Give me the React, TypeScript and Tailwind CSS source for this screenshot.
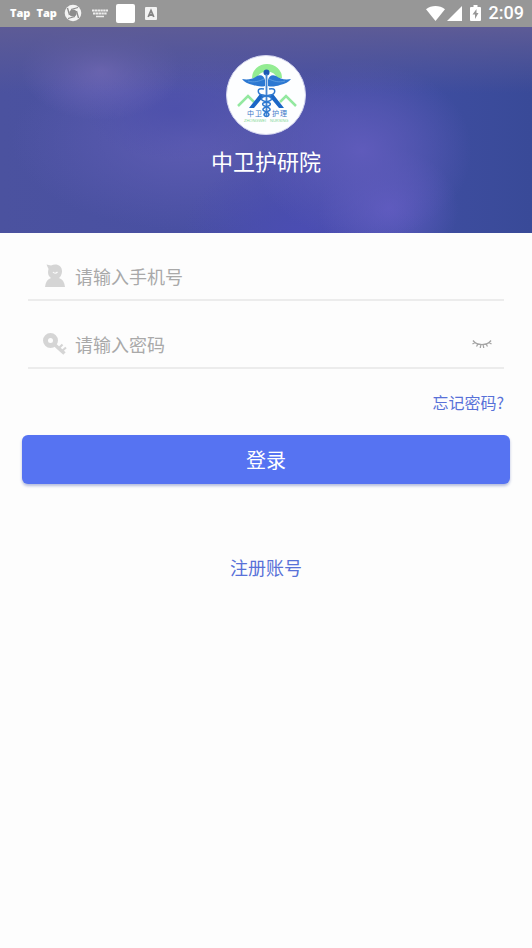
import { useState } from "react";

function StatusBar() {
  return (
    <div className="flex h-[27px] items-center justify-between bg-[#979797] pb-px pl-2.5 pr-2 text-white">
      <div className="flex items-center gap-1.5">
        <span className="font-['Open_Sans',sans-serif] text-[11px] font-extrabold leading-4">Tap</span>
        <span className="font-['Open_Sans',sans-serif] text-[11px] font-extrabold leading-4">Tap</span>
        <svg className="ml-px size-[18px]" viewBox="0 0 18 18">
          <circle cx="9" cy="9" r="8.3" fill="#f3f3f3" />
          <circle cx="9" cy="9" r="3.6" fill="#8c8c8c" />
          <g stroke="#8c8c8c" strokeWidth="1.3">
            <path d="M7 5.5L14 3.5M12.500 7L14.500 14M11 12.500L4 14.500M5.500 11L3.500 4" />
          </g>
        </svg>
        <svg className="ml-1 h-[9px] w-4" viewBox="0 0 16 9" stroke="#ececec" fill="none">
          <path d="M0 1.5h16M1 4.5h14" strokeWidth="1.8" strokeDasharray="2.4 0.4" />
          <path d="M4 7.5h8" strokeWidth="1.5" />
        </svg>
        <div className="ml-0.5 size-[19px] rounded-xs bg-white" />
        <svg className="ml-1 h-[13px] w-3" viewBox="0 0 12 13">
          <rect width="12" height="13" rx="1" fill="#f3f3f3" />
          <path d="M3.2 10L6 3.500L8.800 10M4 8h4" stroke="#858585" strokeWidth="1.8" fill="none" />
        </svg>
      </div>
      <div className="flex items-center">
        <svg className="h-[15px] w-[19px]" viewBox="0 0 19 15" fill="#fff">
          <path d="M0 3.2C5.5-1 13.500-1 19 3.200L9.500 15Z" />
        </svg>
        <svg className="ml-0.5 size-[15px]" viewBox="0 0 15 15" fill="#fff">
          <path d="M15 0V15H0Z" />
        </svg>
        <svg className="ml-2 h-4 w-[11px]" viewBox="0 0 11 16">
          <path d="M3.500 0h4v2H10a1 1 0 0 1 1 1v12a1 1 0 0 1-1 1H1a1 1 0 0 1-1-1V3a1 1 0 0 1 1-1h2.500z" fill="#fff" />
          <path d="M6.500 4L2.500 9.500H5V14L8.500 8H6.500Z" fill="#979797" />
        </svg>
        <span className="ml-2 font-[Roboto,sans-serif] text-[18px] font-medium leading-6">2:09</span>
      </div>
    </div>
  );
}

function Logo() {
  return (
    <svg className="size-20" viewBox="0 0 80 80" role="img" aria-label="中卫护理">
      <circle cx="40" cy="40" r="39.500" fill="#fdfeff" stroke="#d5d6ee" />
      {/* halo and hills */}
      <path d="M26 23A15 14 0 0 1 56 23L51 23A10.500 9.500 0 0 0 31 23Z" fill="#93ec93" />
      <path d="M12 51L22 41L28 47M70 51L60 41L54 47" fill="none" stroke="#93e8a0" strokeWidth="2.500" />
      {/* wings */}
      <path d="M39 31C36 32 31 31.500 27 30C22 29 18 27 16 24C22 25 27 24 31 21C35 19 38 21 39 25Z" fill="#2c78d2" />
      <path d="M42 31C45 32 50 31.500 54 30C59 29 63 27 65 24C59 25 54 24 50 21C46 19 43 21 42 25Z" fill="#2c78d2" />
      <path d="M22 26C28 28 34 26 38 24M59 26C53 28 47 26 43 24" fill="none" stroke="#6ba8e4" strokeWidth="0.700" />
      {/* legs */}
      <path d="M34 39L23 53H28L38 41ZM47 39L58 53H53L43 41Z" fill="#1b66c6" />
      {/* staff and snakes */}
      <circle cx="40.500" cy="17.500" r="3" fill="#1d58b4" />
      <path d="M40.500 19V61" stroke="#4585d2" strokeWidth="1.800" />
      <g fill="none" stroke="#2d78d0" strokeWidth="1.500">
        <path d="M38 34C30 32 31 39 37 40C42 41 47 42 45 45C43 47 35 47 37 50C39 52 45 52 44 55C42 57 38 57 38 60C39 62 42 62 43 60" />
        <path d="M43 34C51 32 50 39 44 40C39 41 34 42 36 45C38 47 46 47 44 50C42 52 36 52 37 55C39 57 43 57 43 60" />
      </g>
      <g className="font-['Noto_Sans_CJK_SC',sans-serif]" fill="#3b78c8" fontSize="7">
        <text x="21" y="61">中</text>
        <text x="29" y="61">卫</text>
        <text x="46" y="61">护</text>
        <text x="54" y="61">理</text>
      </g>
      <g className="font-['Liberation_Sans',sans-serif]" fill="#7fd695" fontSize="4">
        <text x="18" y="67">ZHONGWEI</text>
        <text x="44" y="67">NURSING</text>
      </g>
    </svg>
  );
}

function UserIcon() {
  return (
    <svg className="h-6 w-[22px] shrink-0" viewBox="0 0 22 24" fill="#d5d5d5">
      <path d="M2.500 0.500L7 1.500C13-1 18.500 2 18 8C17.500 11 16.500 13 15 14C18.500 15 20.500 18 21 23H1C1.500 18 3.500 15 7 14C4 12 3.500 9 4.500 5Z" />
      <path d="M9 8Q11 10.500 13.500 8" stroke="#fdfdfd" strokeWidth="1.200" fill="none" />
    </svg>
  );
}

function KeyIcon() {
  return (
    <svg className="h-6 w-[24px] shrink-0" viewBox="0 0 24 24" fill="none" stroke="#d5d5d5">
      <circle cx="7.500" cy="8.500" r="5" strokeWidth="5" />
      <path d="M12 13L21.500 21.500" strokeWidth="3.500" />
      <path d="M16 16L19.500 12.500M19 19L23 15.500" strokeWidth="2.200" />
    </svg>
  );
}

function ClosedEyeIcon() {
  return (
    <svg className="h-2.5 w-5" viewBox="0 0 20 10" fill="none" stroke="#a5a5a5" strokeWidth="1.300">
      <path d="M1 1.500C5 7 15 7 19 1.500M3 3.500L0.500 5M6 5L4.500 7.500M8.800 5.500L8.300 9M11.200 5.500L11.700 9M14 5L15.500 7.500M17 3.500L19.500 5" />
    </svg>
  );
}

const inputClass =
  "min-w-0 flex-1 bg-transparent text-[18px] leading-6 text-[#555] outline-none placeholder:text-[#a9a9a9] placeholder:opacity-100";

export default function App() {
  const [showPassword, setShowPassword] = useState(false);

  return (
    <div className="min-h-screen bg-[#fdfdfd] font-['Noto_Sans_CJK_SC',sans-serif]">
      <StatusBar />

      <header className="flex flex-col items-center bg-[linear-gradient(180deg,#5d5b96_0%,#5d5b9699_12%,#5d5b9600_32%),radial-gradient(ellipse_80px_50px_at_19%_21%,#6e67b9_0%,#6e67b980_45%,#6e67b900_100%),radial-gradient(ellipse_90px_50px_at_33%_40%,#4c4fabcc_0%,#4c4fab00_100%),radial-gradient(ellipse_110px_90px_at_68%_60%,#5f5bbb_0%,#5f5bbb88_50%,#5f5bbb00_100%),radial-gradient(ellipse_70px_60px_at_73%_88%,#5f5bc0_0%,#5f5bc000_100%),radial-gradient(ellipse_120px_80px_at_57%_100%,#4b4db3_0%,#4b4db300_100%),radial-gradient(ellipse_180px_90px_at_36%_55%,#5d5cb2_0%,#5d5cb200_100%),linear-gradient(90deg,#4b529f_0%,#484fa4_50%,#3e4da0_80%,#394a98_100%)] pt-7 pb-[57px]">
        <Logo />
        <h1 className="mt-2.5 text-[22px] leading-[31px] text-white">中卫护研院</h1>
      </header>

      <main>
        <form className="flex flex-col" onSubmit={(e) => e.preventDefault()}>
          <div className="mx-7 flex h-[68px] items-end gap-[9px] border-b-2 border-[#ececec] pl-4 pb-[11px]">
            <label htmlFor="phone" aria-label="手机号">
              <UserIcon />
            </label>
            <input id="phone" type="tel" placeholder="请输入手机号" className={inputClass} />
          </div>
          <div className="mx-7 flex h-[68px] items-end gap-2 border-b-2 border-[#ececec] pl-[15px] pb-[11px]">
            <label htmlFor="password" aria-label="密码">
              <KeyIcon />
            </label>
            <input id="password" type={showPassword ? "text" : "password"} placeholder="请输入密码" className={inputClass} />
            <button
              type="button"
              aria-label="显示密码"
              aria-pressed={showPassword}
              onClick={() => setShowPassword(!showPassword)}
              className="flex h-6 w-11 items-center justify-center"
            >
              <ClosedEyeIcon />
            </button>
          </div>

          <a href="#forgot" className="mt-[21px] mr-7 self-end text-[16px] leading-6 text-[#5871d8]">
            忘记密码?
          </a>
          <button
            type="submit"
            className="mx-[22px] mt-[21px] h-[49px] rounded-md bg-[#5673f2] text-[20px] leading-7 text-white shadow-[0_2px_3px_#b4bcdc]"
          >
            登录
          </button>
        </form>

        <div className="mt-[71px] flex justify-center">
          <a href="#register" className="text-[18px] leading-6 text-[#5871d8]">
            注册账号
          </a>
        </div>
      </main>
    </div>
  );
}
